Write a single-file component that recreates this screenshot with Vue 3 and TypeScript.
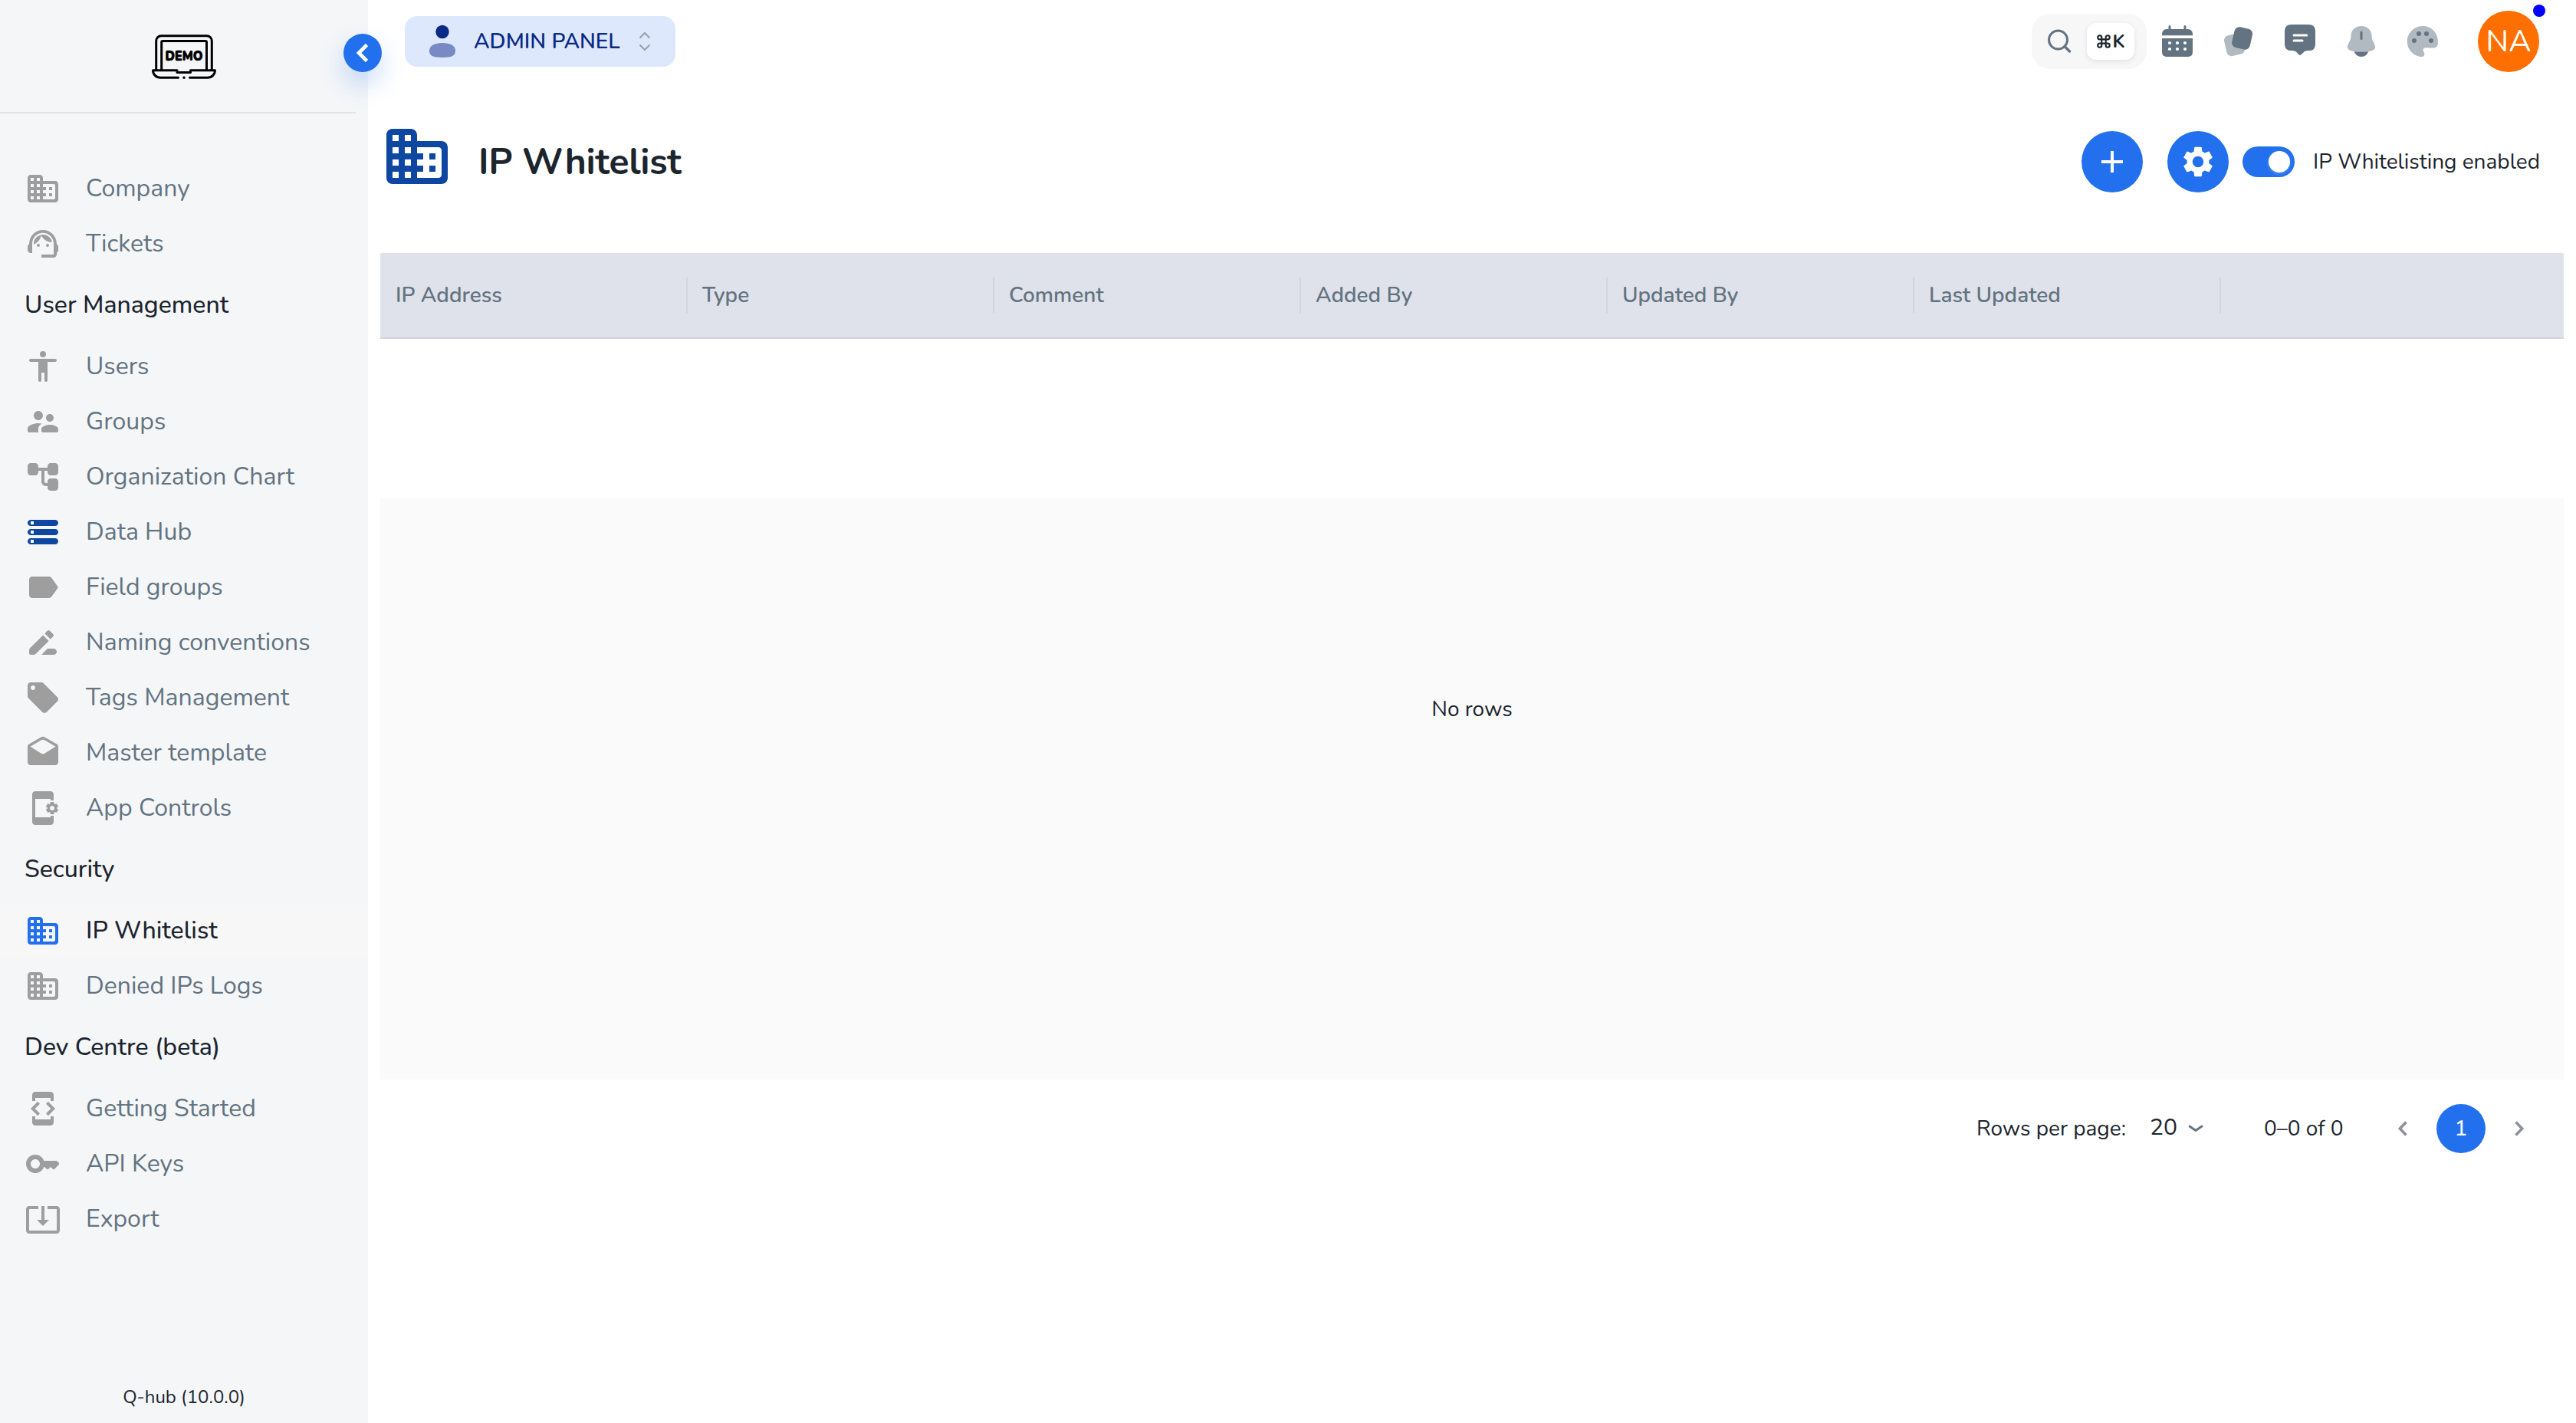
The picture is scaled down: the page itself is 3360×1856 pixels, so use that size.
<script setup lang="ts">
interface NavItem {
  label: string
  icon: string
  tone?: 'navy' | 'active'
}
interface NavSection {
  title?: string
  items: NavItem[]
}

const icons: Record<string, string> = {
  domain:
    'M12 7V5c0-1.1-.9-2-2-2H4c-1.1 0-2 .9-2 2v14c0 1.1.9 2 2 2h16c1.1 0 2-.9 2-2V9c0-1.1-.9-2-2-2h-8zM6 19H4v-2h2v2zm0-4H4v-2h2v2zm0-4H4V9h2v2zm0-4H4V5h2v2zm4 12H8v-2h2v2zm0-4H8v-2h2v2zm0-4H8V9h2v2zm0-4H8V5h2v2zm9 12h-7v-2h2v-2h-2v-2h2v-2h-2V9h7c.55 0 1 .45 1 1v8c0 .55-.45 1-1 1zm-1-8h-2v2h2v-2zm0 4h-2v2h2v-2z',
  agent:
    'M21 12.22C21 6.73 16.74 3 12 3c-4.69 0-9 3.65-9 9.28-.6.34-1 .98-1 1.72v2c0 1.1.9 2 2 2h1v-6.1c0-3.87 3.13-7 7-7s7 3.13 7 7V19h-8v2h8c1.1 0 2-.9 2-2v-1.22c.59-.31 1-.92 1-1.64v-2.3c0-.7-.41-1.31-1-1.62zM9 12a1 1 0 1 0 0 2 1 1 0 0 0 0-2zM15 12a1 1 0 1 0 0 2 1 1 0 0 0 0-2zM18 11.03C17.52 8.18 15.04 6 12.05 6c-3.03 0-6.29 2.51-6.03 6.45 2.47-1.01 4.33-3.21 4.86-5.89 1.31 2.63 4 4.44 7.12 4.47z',
  person:
    'M12 2a2 2 0 1 0 0 4 2 2 0 0 0 0-4zM20 9h-5v12c0 .55-.45 1-1 1s-1-.45-1-1v-5h-2v5c0 .55-.45 1-1 1s-1-.45-1-1V9H4c-.55 0-1-.45-1-1s.45-1 1-1h16c.55 0 1 .45 1 1s-.45 1-1 1z',
  groups:
    'M16.5 12c1.38 0 2.49-1.12 2.49-2.5S17.88 7 16.5 7 14 8.12 14 9.5s1.12 2.5 2.5 2.5zM9 11c1.66 0 2.99-1.34 2.99-3S10.66 5 9 5 6 6.34 6 8s1.34 3 3 3zm7.5 3c-1.83 0-5.5.92-5.5 2.75V18c0 .55.45 1 1 1h9c.55 0 1-.45 1-1v-1.25c0-1.83-3.67-2.75-5.5-2.75zM9 13c-2.33 0-7 1.17-7 3.5V18c0 .55.45 1 1 1h6v-2.25c0-.85.33-2.34 2.37-3.47C10.5 13.1 9.66 13 9 13z',
  tree:
    'M22 9V5c0-1.1-.9-2-2-2h-3c-1.1 0-2 .9-2 2v1H9V5c0-1.1-.9-2-2-2H4c-1.1 0-2 .9-2 2v4c0 1.1.9 2 2 2h3c1.1 0 2-.9 2-2V8h2v7.01C11 16.66 12.34 18 13.99 18H15v1c0 1.1.9 2 2 2h3c1.1 0 2-.9 2-2v-4c0-1.1-.9-2-2-2h-3c-1.1 0-2 .9-2 2v1h-1.01c-.54 0-.99-.45-.99-.99V8h2v1c0 1.1.9 2 2 2h3c1.1 0 2-.9 2-2z',
  storage:
    'M4 20h16c1.1 0 2-.9 2-2s-.9-2-2-2H4c-1.1 0-2 .9-2 2s.9 2 2 2zM2 6c0 1.1.9 2 2 2h16c1.1 0 2-.9 2-2s-.9-2-2-2H4c-1.1 0-2 .9-2 2zM4 14h16c1.1 0 2-.9 2-2s-.9-2-2-2H4c-1.1 0-2 .9-2 2s.9 2 2 2z',
  label:
    'M17.63 5.84C17.27 5.33 16.67 5 16 5L5 5.01C3.9 5.01 3 5.9 3 7v10c0 1.1.9 1.99 2 1.99L16 19c.67 0 1.27-.33 1.63-.84l3.96-5.58c.25-.35.25-.81 0-1.16l-3.96-5.58z',
  rename:
    'M15 16l-4 4h8c1.1 0 2-.9 2-2s-.9-2-2-2h-4zM12.06 7.19L3.59 15.66c-.38.38-.59.88-.59 1.41V19c0 .55.45 1 1 1h1.93c.53 0 1.04-.21 1.41-.59l8.47-8.47-3.75-3.75zM18.71 8.04a1 1 0 0 0 0-1.41l-2.34-2.34a1 1 0 0 0-1.41 0l-1.83 1.83 3.75 3.75 1.83-1.83z',
  tag:
    'M21.41 11.58l-9-9C12.05 2.22 11.55 2 11 2H4c-1.1 0-2 .9-2 2v7c0 .55.22 1.05.59 1.42l9 9c.36.36.86.58 1.41.58s1.05-.22 1.41-.59l7-7c.37-.36.59-.86.59-1.41s-.23-1.06-.59-1.42zM5.5 7C4.67 7 4 6.33 4 5.5S4.67 4 5.5 4 7 4.67 7 5.5 6.33 7 5.5 7z',
  drafts:
    'M21.99 8c0-.72-.37-1.35-.94-1.7l-8.04-4.71c-.62-.37-1.4-.37-2.02 0L2.95 6.3C2.38 6.65 2 7.28 2 8v10c0 1.1.9 2 2 2h16c1.1 0 2-.9 2-2l-.01-10zm-11.05 4.34l-7.2-4.5 7.25-4.25c.62-.37 1.4-.37 2.02 0l7.25 4.25-7.2 4.5c-.65.41-1.47.41-2.12 0z',
  app:
    'M21.81 12.74l-.82-.63v-.22l.8-.63c.16-.12.2-.34.1-.51l-.85-1.48c-.07-.13-.21-.2-.35-.2-.05 0-.1.01-.15.03l-.95.38c-.08-.05-.11-.07-.19-.11l-.15-1.01c-.03-.21-.2-.36-.4-.36h-1.71c-.2 0-.37.15-.4.34l-.14 1.01c-.03.02-.07.03-.1.05l-.09.06-.95-.38c-.05-.02-.1-.03-.15-.03-.14 0-.27.07-.35.2l-.85 1.48c-.1.17-.06.39.1.51l.8.63v.23l-.8.63c-.16.12-.2.34-.1.51l.85 1.48c.07.13.21.2.35.2.05 0 .1-.01.15-.03l.95-.37c.08.05.12.07.2.11l.15 1.01c.03.2.2.34.4.34h1.71c.2 0 .37-.15.4-.34l.15-1.01c.03-.02.07-.03.1-.05l.09-.06.95.38c.05.02.1.03.15.03.14 0 .27-.07.35-.2l.85-1.48c.1-.17.06-.39-.1-.51zM18 13.5c-.83 0-1.5-.67-1.5-1.5s.67-1.5 1.5-1.5 1.5.67 1.5 1.5-.67 1.5-1.5 1.5zM17 18H7V6h10v1h2V3c0-1.1-.9-2-2-2H7c-1.1 0-2 .9-2 2v18c0 1.1.9 2 2 2h10c1.1 0 2-.9 2-2v-4h-2v1z',
  dev:
    'M7 5h10v2h2V3c0-1.1-.9-1.99-2-1.99L7 1c-1.1 0-2 .9-2 2v4h2V5zm8.41 11.59L20 12l-4.59-4.59L14 8.83 17.17 12 14 15.17l1.41 1.42zM10 15.17L6.83 12 10 8.83 8.59 7.41 4 12l4.59 4.59L10 15.17zM17 19H7v-2H5v4c0 1.1.9 2 2 2h10c1.1 0 2-.9 2-2v-4h-2v2z',
  key:
    'M20.59 10h-7.94c-.82-2.33-3.04-4-5.65-4-3.31 0-6 2.69-6 6s2.69 6 6 6c2.61 0 4.83-1.67 5.65-4H13l1.29 1.29c.39.39 1.02.39 1.41 0L17 14l1.29 1.29c.39.39 1.03.39 1.42 0l2.59-2.61c.39-.39.39-1.03-.01-1.42l-.99-.97c-.2-.19-.45-.29-.71-.29zM7 15c-1.65 0-3-1.35-3-3s1.35-3 3-3 3 1.35 3 3-1.35 3-3 3z',
  export:
    'M12 16.5l4-4h-3v-9h-2v9H8l4 4zm9-13h-6v1.99h6v14.03H3V5.49h6V3.5H3c-1.1 0-2 .9-2 2v14c0 1.1.9 2 2 2h18c1.1 0 2-.9 2-2v-14c0-1.1-.9-2-2-2z',
  gear:
    'M19.14 12.94c.04-.3.06-.61.06-.94 0-.32-.02-.64-.07-.94l2.03-1.58c.18-.14.23-.41.12-.61l-1.92-3.32c-.12-.22-.37-.29-.59-.22l-2.39.96c-.5-.38-1.03-.7-1.62-.94l-.36-2.54c-.04-.24-.24-.41-.48-.41h-3.84c-.24 0-.43.17-.47.41l-.36 2.54c-.59.24-1.13.57-1.62.94l-2.39-.96c-.22-.08-.47 0-.59.22L2.74 8.87c-.12.21-.08.47.12.61l2.03 1.58c-.05.3-.09.63-.09.94s.02.64.07.94l-2.03 1.58c-.18.14-.23.41-.12.61l1.92 3.32c.12.22.37.29.59.22l2.39-.96c.5.38 1.03.7 1.62.94l.36 2.54c.05.24.24.41.48.41h3.84c.24 0 .44-.17.47-.41l.36-2.54c.59-.24 1.13-.56 1.62-.94l2.39.96c.22.08.47 0 .59-.22l1.92-3.32c.12-.22.07-.47-.12-.61l-2.01-1.58zM12 15.6c-1.98 0-3.6-1.62-3.6-3.6s1.62-3.6 3.6-3.6 3.6 1.62 3.6 3.6-1.62 3.6-3.6 3.6z',
}

const sections: NavSection[] = [
  {
    items: [
      { label: 'Company', icon: 'domain' },
      { label: 'Tickets', icon: 'agent' },
    ],
  },
  {
    title: 'User Management',
    items: [
      { label: 'Users', icon: 'person' },
      { label: 'Groups', icon: 'groups' },
      { label: 'Organization Chart', icon: 'tree' },
      { label: 'Data Hub', icon: 'storage', tone: 'navy' },
      { label: 'Field groups', icon: 'label' },
      { label: 'Naming conventions', icon: 'rename' },
      { label: 'Tags Management', icon: 'tag' },
      { label: 'Master template', icon: 'drafts' },
      { label: 'App Controls', icon: 'app' },
    ],
  },
  {
    title: 'Security',
    items: [
      { label: 'IP Whitelist', icon: 'domain', tone: 'active' },
      { label: 'Denied IPs Logs', icon: 'domain' },
    ],
  },
  {
    title: 'Dev Centre (beta)',
    items: [
      { label: 'Getting Started', icon: 'dev' },
      { label: 'API Keys', icon: 'key' },
      { label: 'Export', icon: 'export' },
    ],
  },
]

const columns = ['IP Address', 'Type', 'Comment', 'Added By', 'Updated By', 'Last Updated']
</script>

<template>
  <div class="page">
    <aside class="sidebar">
      <div class="brand">
        <svg class="logo" viewBox="0 0 84 58" fill="none" stroke="#000" stroke-width="3" stroke-linecap="round" stroke-linejoin="round">
          <path d="M5.7 46V8.5a6.5 6.5 0 0 1 6.5-6.7h59.6a6.5 6.5 0 0 1 6.5 6.7V46" />
          <path d="M12.7 46V10q0-1.5 1.5-1.5h55.8q1.5 0 1.5 1.5V46" />
          <path d="M1.5 46.8H33v2.7h17.5v-2.7h32c0 5-4 9.4-9.5 9.4H49.5M34.5 56.2H11c-5.5 0-9.5-4.4-9.5-9.4" />
          <circle cx="42" cy="56.2" r="1.7" fill="#000" stroke="none" />
          <text x="17.500" y="33.6" textLength="49" lengthAdjust="spacingAndGlyphs" class="logo-text">DEMO</text>
        </svg>
      </div>
      <nav class="nav">
        <template v-for="(section, i) in sections" :key="i">
          <div v-if="section.title" class="nav-title">{{ section.title }}</div>
          <a v-for="item in section.items" :key="item.label" class="nav-item" :class="item.tone">
            <svg class="nav-icon" viewBox="0 0 24 24">
              <path :d="icons[item.icon]" />
              <path v-if="item.icon === 'storage'" d="M4 5h2v2H4zM4 11h2v2H4zM4 17h2v2H4z" fill="#fff" />
            </svg>
            <span class="nav-label">{{ item.label }}</span>
          </a>
        </template>
      </nav>
      <div class="version">Q-hub (10.0.0)</div>
      <button class="collapse" aria-label="Collapse">
        <svg viewBox="0 0 50 50" fill="none" stroke="#fff" stroke-width="4.6"><path d="M30.5 14.5L20 25l10.5 10.5" /></svg>
      </button>
    </aside>

    <main class="main">
      <header class="topbar">
        <button class="panel-switch">
          <svg class="panel-user" viewBox="0 0 36 44">
            <circle cx="18" cy="9.5" r="8.7" fill="#092a86" />
            <path d="M1 34c0-6.5 7-10 17-10s17 3.5 17 10c0 6-3 9-17 9S1 40 1 34z" fill="#778ac4" />
          </svg>
          <span class="panel-label">ADMIN PANEL</span>
          <svg class="panel-arrows" viewBox="0 0 16 26" fill="none" stroke="#98a2b0" stroke-width="2.2"><path d="M1.5 8.500L8 2l6.500 6.500M1.500 17.500L8 24l6.500-6.500" /></svg>
        </button>

        <div class="tools">
          <div class="search">
            <svg class="search-icon" viewBox="0 0 32 32" fill="none" stroke="#637381" stroke-width="3"><circle cx="14.5" cy="14" r="12" /><path d="M23 22.5l6.5 6.5" stroke-width="3.4" stroke-linecap="round" /></svg>
            <span class="kbd">
              <svg class="cmd" viewBox="0 0 20 20" fill="none" stroke="#1c252e" stroke-width="2.4"><path d="M7 7V4.2A2.8 2.8 0 1 0 4.2 7H15.8A2.8 2.8 0 1 0 13 4.2V15.8A2.8 2.8 0 1 0 15.8 13H4.2A2.8 2.8 0 1 0 7 15.8z" /></svg>
              <span>K</span>
            </span>
          </div>
          <div class="icons">
            <svg viewBox="0 0 48 48" fill="#637381">
              <path d="M14 4.5V10M34 4.5V10" stroke="#637381" stroke-width="3" stroke-linecap="round" />
              <path d="M4 16.3V14a6 6 0 0 1 6-6h28a6 6 0 0 1 6 6v2.3zM4 20h40v17c0 5-2 7-7 7H11c-5 0-7-2-7-7z" />
              <g fill="#fff"><circle cx="14" cy="26" r="2.1" /><circle cx="24" cy="26" r="2.1" /><circle cx="34" cy="26" r="2.1" /><circle cx="14" cy="34" r="2.1" /><circle cx="24" cy="34" r="2.1" /><circle cx="34" cy="34" r="2.1" /></g>
            </svg>
            <svg viewBox="0 0 48 48">
              <rect x="6.5" y="14.7" width="24" height="27.5" rx="6.5" transform="rotate(-13 18.5 28.5)" fill="#b1b9c1" />
              <rect x="16.6" y="6.2" width="24" height="27.5" rx="6.5" transform="rotate(13 28.6 20)" fill="#637381" />
            </svg>
            <svg viewBox="0 0 48 48">
              <path d="M13 2h22c6 0 9 3 9 9v16c0 6-3 9-7 9-5 0-7 .3-8.5 2.5L25.5 41.3q-1.500 1.400-3 0L20 38.500C18 36.300 16 36 12 36c-5 0-8-3-8-9V11c0-6 3-9 9-9z" fill="#637381" />
              <path d="M16 16h16.700M16 23h11" stroke="#fff" stroke-width="3" stroke-linecap="round" />
            </svg>
            <svg viewBox="0 0 48 48">
              <path d="M14.700 36.500c1 4.500 4.500 7.500 9.300 7.500s8.300-3 9.300-7.500z" fill="#637381" />
              <path d="M24 4c8 0 13.500 5.500 13.500 13 0 7 4.500 9 4.500 14.500 0 4-6 6.300-18 6.300S6 35.500 6 31.500C6 26 10.500 24 10.500 17 10.500 9.500 16 4 24 4z" fill="#b1b9c1" />
              <path d="M24 12v8.500" stroke="#637381" stroke-width="3" stroke-linecap="round" />
            </svg>
            <svg viewBox="0 0 48 48">
              <path d="M24 4a20 20 0 0 0-.5 40c3-.3 3.600-3.300 1.800-6.500-1.600-2.800-.3-5.200 3-5.200l9.700.2c4.500 0 6-3 6-7.500C44 12 35 4 24 4z" fill="#b1b9c1" />
              <g fill="#637381"><circle cx="13" cy="23" r="3" /><circle cx="19" cy="14" r="3" /><circle cx="29" cy="14" r="3" /><circle cx="35" cy="23" r="3" /></g>
            </svg>
          </div>
          <div class="avatar"><span>NA</span><i class="badge"></i></div>
        </div>
      </header>

      <section class="heading">
        <svg class="heading-icon" viewBox="0 0 24 24" fill="#0d47a1"><path :d="icons.domain" /></svg>
        <h1>IP Whitelist</h1>
        <div class="actions">
          <button class="round" aria-label="Add"><svg viewBox="0 0 24 24" fill="#fff"><path d="M19 13h-6v6h-2v-6H5v-2h6V5h2v6h6v2z" /></svg></button>
          <button class="round" aria-label="Settings"><svg viewBox="0 0 24 24" fill="#fff"><path :d="icons.gear" /></svg></button>
          <span class="toggle"><i></i></span>
          <span class="toggle-label">IP Whitelisting enabled</span>
        </div>
      </section>

      <section class="grid">
        <div class="grid-head">
          <div v-for="label in columns" :key="label" class="cell">{{ label }}</div>
        </div>
        <div class="grid-gap"></div>
        <div class="grid-empty">No rows</div>
        <footer class="pager">
          <span class="rows-label">Rows per page:</span>
          <span class="rows-value">20</span>
          <svg class="rows-caret" viewBox="0 0 22 12" fill="none" stroke="#637381" stroke-width="2.8" stroke-linecap="round" stroke-linejoin="round"><path d="M3 3l8 5.5L19 3" /></svg>
          <span class="range">0–0 of 0</span>
          <svg class="arrow" viewBox="0 0 14 20" fill="none" stroke="#8f9399" stroke-width="3.6"><path d="M11.500 1.500L3.300 10l8.200 8.500" /></svg>
          <span class="current">1</span>
          <svg class="arrow" viewBox="0 0 14 20" fill="none" stroke="#8f9399" stroke-width="3.6"><path d="M2.500 1.500l8.200 8.500-8.200 8.500" /></svg>
        </footer>
      </section>
    </main>
  </div>
</template>

<style>
body {
  margin: 0;
  background: #fff;
}
</style>

<style scoped>
.page {
  display: flex;
  width: 3360px;
  height: 1856px;
  overflow: hidden;
  font-family: Nunito, Lato, sans-serif;
  font-size: 28px;
  color: #1c252e;
  background: #fff;
}
.page *,
.page {
  box-sizing: border-box;
}
.page span {
  white-space: nowrap;
}
button {
  border: 0;
  padding: 0;
  font: inherit;
}
svg {
  display: block;
  flex: none;
}
.sidebar {
  position: relative;
  display: flex;
  flex-direction: column;
  width: 480px;
  flex: none;
  background: #f4f6f8;
}
.brand {
  display: flex;
  justify-content: center;
  width: 464px;
  height: 148px;
  padding: 45px 0 0 16px;
  border-bottom: 2px solid #e1e4e7;
}
.logo {
  width: 84px;
  height: 58px;
}
.logo-text {
  font-size: 18px;
  font-weight: 900;
  fill: #000;
  stroke-width: 0.6;
}
.nav {
  flex: 1;
  padding-top: 62px;
}
.nav-title {
  height: 88px;
  padding: 0 32px;
  font-size: 32px;
  line-height: 87px;
  font-weight: 500;
}
.nav-item {
  display: flex;
  align-items: center;
  height: 72px;
  padding-left: 32px;
  font-size: 32px;
  color: #637381;
}
.nav-icon {
  width: 48px;
  height: 48px;
  margin-right: 32px;
  fill: #9e9e9e;
}
.nav-label {
  padding-bottom: 1px;
}
.nav-item.navy .nav-icon {
  fill: #0d47a1;
}
.nav-item.active {
  background: #f7f7f8;
  color: #1c252e;
  font-weight: 500;
}
.nav-item.active .nav-icon {
  fill: #2270ee;
}
.version {
  height: 68px;
  text-align: center;
  font-size: 24px;
  line-height: 69px;
}
.collapse {
  position: absolute;
  top: 44px;
  left: 448px;
  width: 50px;
  height: 50px;
  border-radius: 50%;
  background: #2270ee;
  box-shadow: 0 16px 32px rgba(34, 112, 238, 0.24);
}
.main {
  flex: 1;
  display: flex;
  flex-direction: column;
}
.topbar {
  display: flex;
  align-items: center;
  justify-content: space-between;
  height: 108px;
  padding: 0 48px;
}
.panel-switch {
  display: flex;
  align-items: center;
  width: 353px;
  height: 66px;
  padding-left: 31px;
  border-radius: 16px;
  background: #dde8fc;
  color: #092a86;
  font-weight: 600;
}
.panel-user {
  width: 36px;
  height: 44px;
}
.panel-label {
  width: 192px;
  margin: 0 23px;
  text-align: left;
}
.panel-arrows {
  width: 16px;
  height: 26px;
}
.tools {
  display: flex;
  align-items: center;
}
.search {
  display: flex;
  align-items: center;
  justify-content: space-between;
  width: 150px;
  height: 72px;
  padding: 0 16px 0 20px;
  border-radius: 24px;
  background: #f7f7f8;
}
.search-icon {
  width: 32px;
  height: 32px;
}
.kbd {
  display: flex;
  align-items: center;
  justify-content: center;
  width: 62px;
  height: 48px;
  border-radius: 12px;
  background: #fff;
  box-shadow: 0 2px 6px rgba(28, 37, 46, 0.1);
  font-size: 24px;
  font-weight: 700;
  gap: 3px;
}
.cmd {
  width: 18px;
  height: 18px;
}
.icons {
  display: flex;
  gap: 32px;
  margin: 0 48px 0 16px;
}
.icons svg {
  width: 48px;
  height: 48px;
}
.avatar {
  position: relative;
  display: flex;
  align-items: center;
  justify-content: center;
  width: 80px;
  height: 80px;
  border-radius: 50%;
  background: #ff6f00;
  color: #fff;
  font-size: 40px;
}
.badge {
  position: absolute;
  top: -8px;
  right: -8px;
  width: 16px;
  height: 16px;
  border-radius: 50%;
  background: #0000ff;
}
.heading {
  display: flex;
  align-items: center;
  height: 222px;
  padding: 0 48px 16px 16px;
}
.heading-icon {
  width: 96px;
  height: 96px;
  margin-bottom: 14px;
}
h1 {
  margin: 0 0 0 32px;
  font-size: 48px;
  line-height: 60px;
  font-weight: 700;
  letter-spacing: -0.25px;
}
.actions {
  display: flex;
  align-items: center;
  margin-left: auto;
}
.round {
  display: grid;
  place-items: center;
  width: 80px;
  height: 80px;
  margin-right: 32px;
  border-radius: 50%;
  background: #2270ee;
}
.round + .round {
  margin-right: 18px;
}
.round svg {
  width: 48px;
  height: 48px;
}
.toggle {
  display: flex;
  align-items: center;
  justify-content: flex-end;
  width: 68px;
  height: 40px;
  padding-right: 6px;
  border-radius: 20px;
  background: #2270ee;
}
.toggle i {
  width: 28px;
  height: 28px;
  border-radius: 50%;
  background: #fff;
  box-shadow: 0 2px 4px rgba(255, 255, 255, 0.2);
}
.toggle-label {
  width: 295px;
  margin-left: 24px;
}
.grid {
  margin: 0 16px;
}
.grid-head {
  display: flex;
  align-items: center;
  height: 112px;
  border-bottom: 2px solid #d1d4e0;
  background: #dfe2ea;
  color: #637381;
  font-weight: 600;
}
.cell {
  width: 401px;
  height: 48px;
  margin-right: -1px;
  padding-left: 20px;
  line-height: 48px;
  border-right: 2px solid #d2d6de;
}
.grid-gap {
  height: 208px;
}
.grid-empty {
  display: flex;
  justify-content: center;
  height: 758px;
  padding-top: 256px;
  background: #fafafa;
}
.pager {
  display: flex;
  align-items: center;
  justify-content: flex-end;
  height: 128px;
  padding-right: 51px;
}
.rows-label {
  width: 197px;
  margin-right: 29px;
}
.rows-value {
  width: 37px;
  margin-right: 12px;
  padding-bottom: 3px;
  font-size: 30px;
}
.rows-caret {
  width: 22px;
  height: 12px;
  margin-right: 78px;
}
.range {
  width: 105px;
  margin-right: 69px;
}
.arrow {
  width: 14px;
  height: 20px;
}
.current {
  width: 64px;
  height: 64px;
  margin: 0 37px;
  border-radius: 50%;
  background: #2270ee;
  color: #fff;
  font-weight: 500;
  line-height: 64px;
  text-align: center;
}
</style>
